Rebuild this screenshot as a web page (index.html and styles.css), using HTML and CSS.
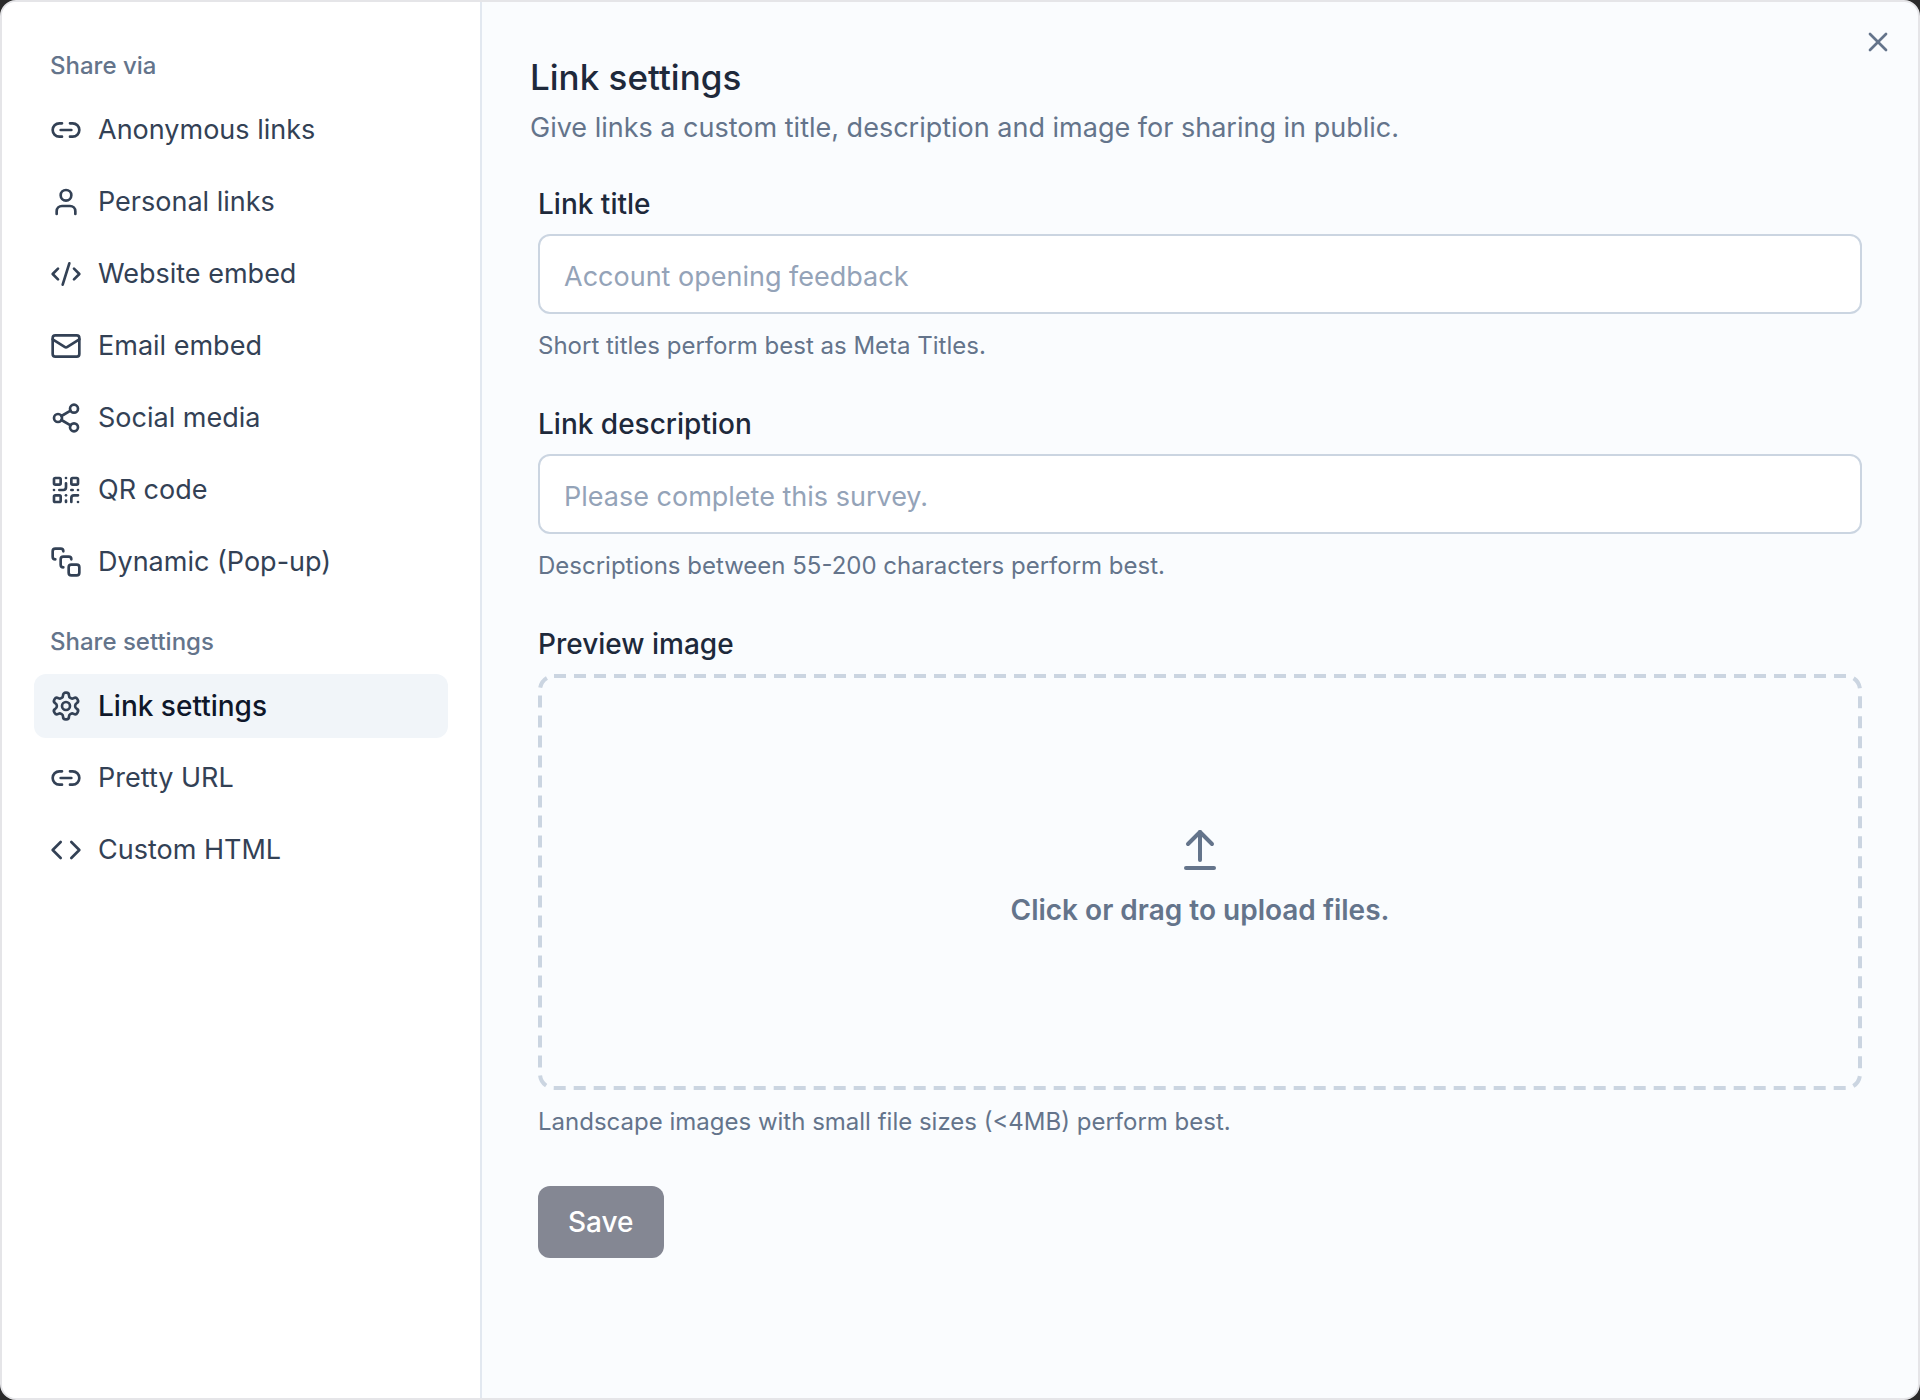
FILE: index.html
```
<!DOCTYPE html>
<html lang="en">
<head>
  <meta charset="UTF-8" />
  <meta name="viewport" content="width=device-width, initial-scale=1.0" />
  <title>Link settings</title>
  <link rel="stylesheet" href="styles.css">
</head>
<body>
  <div class="dialog" role="dialog" aria-labelledby="dialogTitle">
    <nav class="sidebar">
      <h2 class="nav-heading">Share via</h2>
      <ul class="nav-list">
        <li>
          <a class="nav-item" href="#anonymous-links">
            <svg class="icon" viewBox="0 0 24 24"><path d="M9 17H7A5 5 0 0 1 7 7h2" /><path d="M15 7h2a5 5 0 1 1 0 10h-2" /><path d="M8 12h8" /></svg>
            Anonymous links
          </a>
        </li>
        <li>
          <a class="nav-item" href="#personal-links">
            <svg class="icon" viewBox="0 0 24 24"><path d="M19 21v-2a4 4 0 0 0-4-4H9a4 4 0 0 0-4 4v2" /><circle cx="12" cy="7" r="4" /></svg>
            Personal links
          </a>
        </li>
        <li>
          <a class="nav-item" href="#website-embed">
            <svg class="icon" viewBox="0 0 24 24"><path d="m18 16 4-4-4-4" /><path d="m6 8-4 4 4 4" /><path d="m14.500 4-5 16" /></svg>
            Website embed
          </a>
        </li>
        <li>
          <a class="nav-item" href="#email-embed">
            <svg class="icon" viewBox="0 0 24 24"><rect x="2" y="4" width="20" height="16" rx="2" /><path d="m22 7-8.970 5.700a1.940 1.940 0 0 1-2.060 0L2 7" /></svg>
            Email embed
          </a>
        </li>
        <li>
          <a class="nav-item" href="#social-media">
            <svg class="icon" viewBox="0 0 24 24"><circle cx="18" cy="5" r="3" /><circle cx="6" cy="12" r="3" /><circle cx="18" cy="19" r="3" /><path d="m8.590 13.510 6.830 3.980" /><path d="m15.410 6.510-6.820 3.980" /></svg>
            Social media
          </a>
        </li>
        <li>
          <a class="nav-item" href="#qr-code">
            <svg class="icon" viewBox="0 0 24 24"><rect x="3" y="3" width="5" height="5" rx="1" /><rect x="16" y="3" width="5" height="5" rx="1" /><rect x="3" y="16" width="5" height="5" rx="1" /><path d="M21 16h-3a2 2 0 0 0-2 2v3" /><path d="M21 21v.01" /><path d="M12 7v3a2 2 0 0 1-2 2H7" /><path d="M3 12h.01" /><path d="M12 3h.01" /><path d="M12 16v.01" /><path d="M16 12h1" /><path d="M21 12v.01" /><path d="M12 21v-1" /></svg>
            QR code
          </a>
        </li>
        <li>
          <a class="nav-item" href="#dynamic">
            <svg class="icon" viewBox="0 0 24 24"><path d="M4 10c-1.100 0-2-.9-2-2V4c0-1.100.9-2 2-2h4c1.100 0 2 .9 2 2" /><path d="M10 16c-1.100 0-2-.9-2-2v-4c0-1.100.9-2 2-2h4c1.100 0 2 .9 2 2" /><rect x="14" y="14" width="8" height="8" rx="2" /></svg>
            Dynamic (Pop-up)
          </a>
        </li>
      </ul>

      <h2 class="nav-heading">Share settings</h2>
      <ul class="nav-list">
        <li>
          <a class="nav-item active" href="#link-settings" aria-current="page">
            <svg class="icon" viewBox="0 0 24 24"><path d="M12.220 2h-.44a2 2 0 0 0-2 2v.18a2 2 0 0 1-1 1.730l-.43.25a2 2 0 0 1-2 0l-.15-.08a2 2 0 0 0-2.730.73l-.22.38a2 2 0 0 0 .73 2.730l.15.1a2 2 0 0 1 1 1.720v.51a2 2 0 0 1-1 1.740l-.15.09a2 2 0 0 0-.73 2.730l.22.38a2 2 0 0 0 2.730.73l.15-.08a2 2 0 0 1 2 0l.43.25a2 2 0 0 1 1 1.730V20a2 2 0 0 0 2 2h.44a2 2 0 0 0 2-2v-.18a2 2 0 0 1 1-1.730l.43-.25a2 2 0 0 1 2 0l.15.08a2 2 0 0 0 2.730-.73l.22-.39a2 2 0 0 0-.73-2.730l-.15-.08a2 2 0 0 1-1-1.740v-.5a2 2 0 0 1 1-1.740l.15-.09a2 2 0 0 0 .73-2.730l-.22-.38a2 2 0 0 0-2.730-.73l-.15.08a2 2 0 0 1-2 0l-.43-.25a2 2 0 0 1-1-1.730V4a2 2 0 0 0-2-2z" /><circle cx="12" cy="12" r="3" /></svg>
            Link settings
          </a>
        </li>
        <li>
          <a class="nav-item" href="#pretty-url">
            <svg class="icon" viewBox="0 0 24 24"><path d="M9 17H7A5 5 0 0 1 7 7h2" /><path d="M15 7h2a5 5 0 1 1 0 10h-2" /><path d="M8 12h8" /></svg>
            Pretty URL
          </a>
        </li>
        <li>
          <a class="nav-item" href="#custom-html">
            <svg class="icon" viewBox="0 0 24 24"><path d="m16 18 6-6-6-6" /><path d="m8 6-6 6 6 6" /></svg>
            Custom HTML
          </a>
        </li>
      </ul>
    </nav>

    <main class="content">
      <h1 class="title" id="dialogTitle">Link settings</h1>
      <p class="subtitle">Give links a custom title, description and image for sharing in public.</p>

      <form class="settings-form" id="linkForm">
        <div class="field">
          <label for="linkTitle">Link title</label>
          <input type="text" id="linkTitle" placeholder="Account opening feedback" />
          <p class="hint">Short titles perform best as Meta Titles.</p>
        </div>

        <div class="field">
          <label for="linkDescription">Link description</label>
          <input type="text" id="linkDescription" placeholder="Please complete this survey." />
          <p class="hint">Descriptions between 55-200 characters perform best.</p>
        </div>

        <div class="field">
          <label for="previewImage">Preview image</label>
          <label class="dropzone" for="previewImage">
            <svg class="dashes" aria-hidden="true"><rect x="2" y="2" rx="14" /></svg>
            <svg class="icon icon-upload" viewBox="0 0 24 24"><path d="m18 9-6-6-6 6" /><path d="M12 3v14" /><path d="M5 21h14" /></svg>
            <span class="dropzone-text">Click or drag to upload files.</span>
            <input class="file-input" type="file" id="previewImage" accept="image/*" />
          </label>
          <p class="hint">Landscape images with small file sizes (&lt;4MB) perform best.</p>
        </div>

        <button class="save" type="submit" disabled>Save</button>
      </form>
    </main>

    <button class="close" type="button" aria-label="Close">
      <svg class="icon" viewBox="0 0 24 24"><path d="M18 6 6 18" /><path d="m6 6 12 12" /></svg>
    </button>
  </div>
</body>
</html>
```
FILE: styles.css
```
* {
  box-sizing: border-box;
}
body {
  margin: 0;
  background-color: #2b2b2b;
  font-family: Inter, sans-serif;
  font-size: 27px;
  line-height: 40px;
  color: #1e293b;
}
h1, h2, p, ul {
  margin: 0;
  padding: 0;
}
.dialog {
  position: relative;
  display: flex;
  min-height: 100vh;
  border: 2px solid #e5e5e8;
  border-radius: 16px;
  background-color: #fafcfe;
  overflow: hidden;
}
.icon {
  width: 32px;
  height: 32px;
  flex-shrink: 0;
  fill: none;
  stroke: currentColor;
  stroke-width: 2;
  stroke-linecap: round;
  stroke-linejoin: round;
}

/* sidebar */
.sidebar {
  flex: 0 0 480px;
  padding: 48px 32px;
  border-right: 2px solid #e2e8f0;
  background-color: white;
}
.nav-heading {
  margin-bottom: 16px;
  padding-left: 16px;
  font-size: 24px;
  font-weight: 500;
  line-height: 32px;
  color: #64748b;
}
.nav-list {
  display: flex;
  flex-direction: column;
  gap: 8px;
  list-style: none;
}
.nav-list + .nav-heading {
  margin-top: 32px;
}
.nav-item {
  display: flex;
  align-items: center;
  gap: 16px;
  height: 64px;
  padding: 0 16px;
  border-radius: 12px;
  color: #334155;
  text-decoration: none;
}
.nav-item.active {
  background-color: #f1f5f9;
  color: #0f172a;
  font-size: 28px;
  font-weight: 500;
}
.nav-item.active .icon {
  color: #334155;
}

/* settings */
.content {
  flex: 1;
  padding: 56px 48px;
}
.title {
  font-size: 35px;
  font-weight: 500;
  line-height: 38px;
}
.subtitle {
  margin-top: 12px;
  color: #64748b;
}
.settings-form {
  display: flex;
  flex-direction: column;
  align-items: flex-start;
  gap: 48px;
  margin-top: 42px;
  padding: 0 8px;
}
.field {
  display: flex;
  flex-direction: column;
  gap: 16px;
  width: 100%;
}
.field label {
  font-size: 28px;
  font-weight: 500;
  line-height: 28px;
}
input[type="text"] {
  width: 100%;
  height: 80px;
  padding: 4px 24px 0;
  border: 2px solid #cbd5e1;
  border-radius: 12px;
  background-color: white;
  font: inherit;
  color: #1e293b;
}
input[type="text"]::placeholder {
  color: #94a3b8;
}
.hint {
  font-size: 24px;
  line-height: 32px;
  color: #64748b;
}
.field .dropzone {
  position: relative;
  display: flex;
  flex-direction: column;
  align-items: center;
  justify-content: center;
  gap: 16px;
  height: 416px;
  padding-bottom: 8px;
  font-weight: 600;
  line-height: 40px;
  color: #64748b;
  cursor: pointer;
}
.dashes {
  position: absolute;
  inset: 0;
  width: 100%;
  height: 100%;
}
.dashes rect {
  width: calc(100% - 4px);
  height: calc(100% - 4px);
  fill: none;
  stroke: #cbd5e1;
  stroke-width: 4;
  stroke-dasharray: 12 8;
}
.icon-upload {
  width: 48px;
  height: 48px;
}
.file-input {
  position: absolute;
  inset: 0;
  opacity: 0;
  pointer-events: none;
}
.save {
  height: 72px;
  padding: 0 30px;
  border: none;
  border-radius: 12px;
  background-color: #0f172a;
  font: inherit;
  font-size: 28px;
  font-weight: 500;
  color: white;
  cursor: pointer;
}
.save:disabled {
  background-color: #848793;
  cursor: not-allowed;
}
.close {
  position: absolute;
  top: 24px;
  right: 24px;
  display: flex;
  padding: 0;
  border: none;
  background: none;
  color: #64748b;
  cursor: pointer;
}
```
